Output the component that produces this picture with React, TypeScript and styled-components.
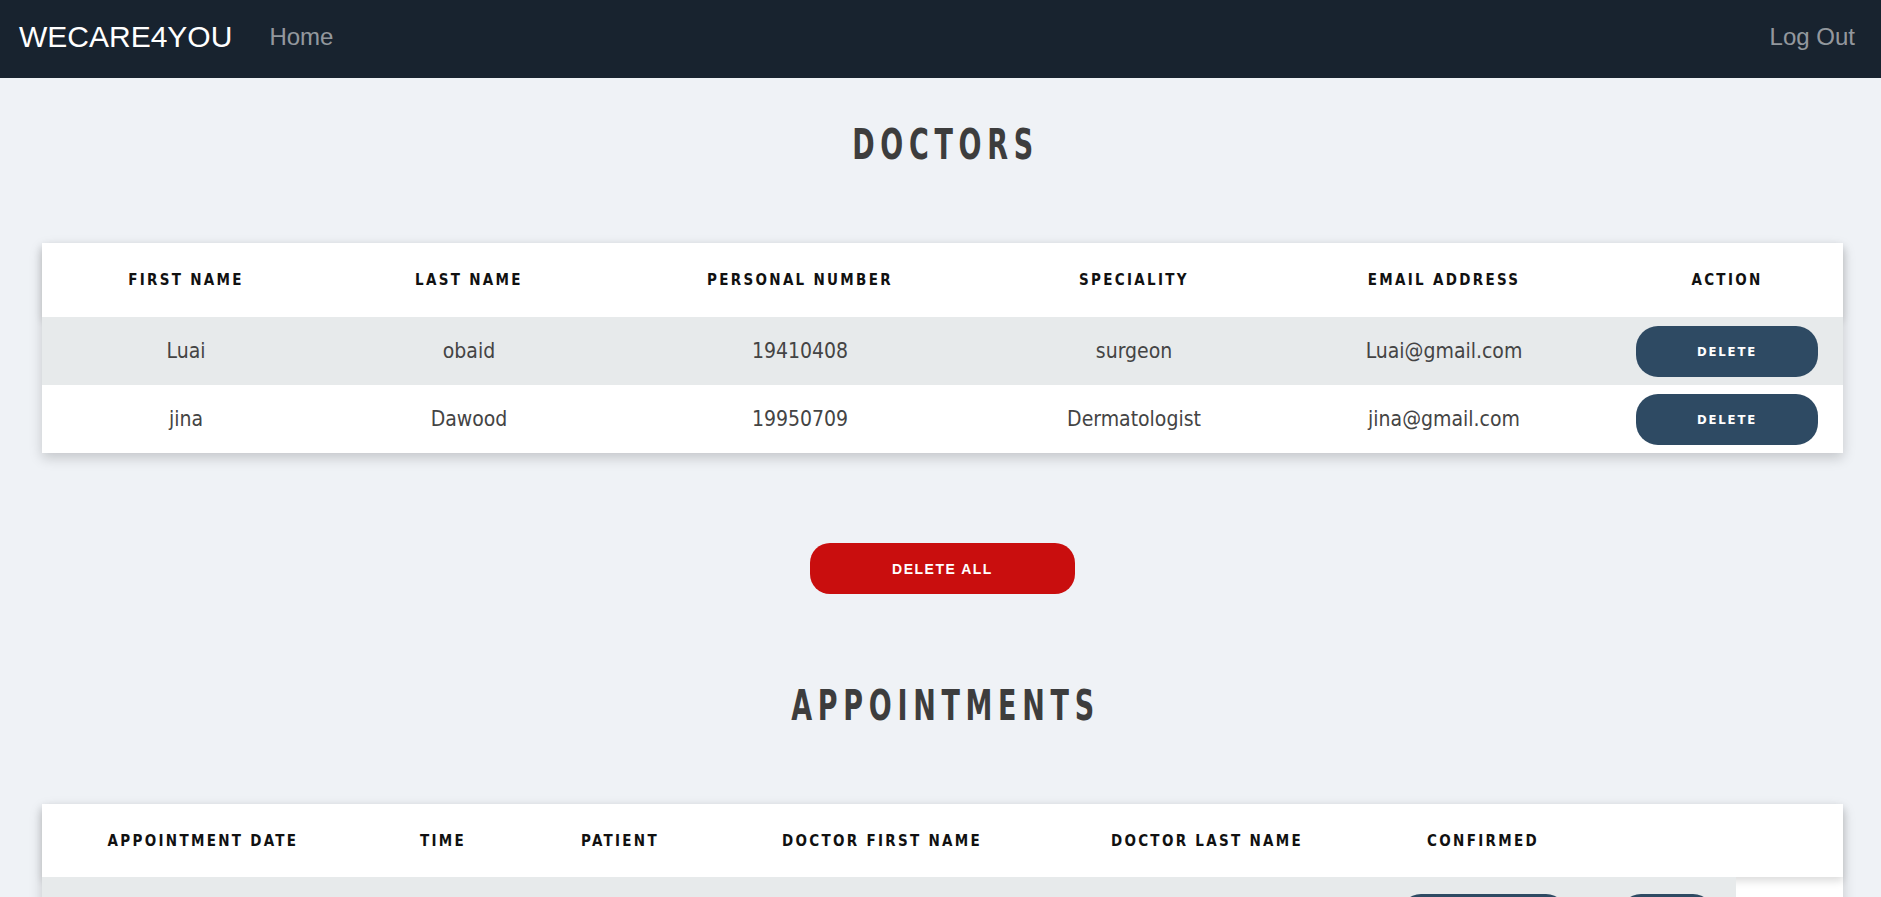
import styled, { createGlobalStyle } from "styled-components";

const GlobalStyle = createGlobalStyle`
  html, body {
    margin: 0;
    background: #eff2f6;
  }
  body {
    font-family: "Liberation Sans", Arial, sans-serif;
  }
  * {
    box-sizing: border-box;
  }
`;

const Navbar = styled.nav`
  height: 78px;
  background: #18232f;
  display: flex;
  align-items: center;
  padding: 0 26px 5px 19px;
`;

const Brand = styled.a`
  color: #fff;
  font-size: 30px;
  text-decoration: none;
  margin-right: 37px;
`;

const NavLink = styled.a<{ $right?: boolean }>`
  color: rgba(255, 255, 255, 0.55);
  font-size: 24px;
  text-decoration: none;
  margin-left: ${(p) => (p.$right ? "auto" : "0")};
`;

const Main = styled.main`
  padding: 43px 38px 0 42px;
  display: flex;
  flex-direction: column;
  align-items: center;
`;

// condensed heavy display heading, stretched tall like Impact
const Heading = styled.h1`
  margin: 0 0 74px;
  padding-left: 6px;
  font-family: "DejaVu Sans Condensed", "DejaVu Sans", sans-serif;
  font-stretch: condensed;
  font-weight: 700;
  font-size: 30px;
  line-height: 48px;
  letter-spacing: 5.7px;
  color: #3d3d3d;
  text-transform: uppercase;
  transform: scaleY(1.4);
`;

const Card = styled.div`
  align-self: stretch;
  background: #fff;
  box-shadow: 0 5px 12px rgba(0, 0, 0, 0.18);
`;

const Row = styled.div<{ $cols: string; $h: number; $shade?: boolean; $w?: string }>`
  display: grid;
  grid-template-columns: ${(p) => p.$cols};
  height: ${(p) => p.$h}px;
  width: ${(p) => p.$w || "auto"};
  align-items: center;
  background: ${(p) => (p.$shade ? "#e7eaeb" : "transparent")};
`;

const HeadRow = styled(Row)`
  box-shadow: 0 4px 8px rgba(0, 0, 0, 0.14);
`;

const HeadCell = styled.div`
  text-align: center;
  font-family: "DejaVu Sans Condensed", "DejaVu Sans", sans-serif;
  font-stretch: condensed;
  font-weight: 700;
  font-size: 15px;
  letter-spacing: 2.3px;
  color: #111;
`;

const Cell = styled.div`
  text-align: center;
  font-family: "DejaVu Sans Condensed", "DejaVu Sans", sans-serif;
  font-stretch: condensed;
  font-size: 21px;
  color: #444;
`;

const DeleteBtn = styled.button<{ $w: number }>`
  justify-self: center;
  width: ${(p) => p.$w}px;
  height: 51px;
  border: none;
  border-radius: 22px;
  background: #2e4a63;
  color: #fff;
  font-family: "DejaVu Sans Condensed", "DejaVu Sans", sans-serif;
  font-stretch: condensed;
  font-weight: 700;
  font-size: 13px;
  letter-spacing: 1.8px;
  cursor: pointer;
`;

const DeleteAll = styled.button`
  margin: 90px 0 88px;
  width: 265px;
  height: 51px;
  border: none;
  border-radius: 20px;
  background: #c90e0e;
  color: #fff;
  font-family: "Liberation Sans", Arial, sans-serif;
  font-weight: 700;
  font-size: 14px;
  letter-spacing: 1.5px;
  cursor: pointer;
`;

const AppointmentRow = styled(Row)`
  align-items: start;
  padding-top: 17px;
`;

const doctorCols = "288px 278px 384px 284px 336px 230px";
const apptCols = "322px 158px 196px 328px 322px 230px 138px";

const doctors = [
  { first: "Luai", last: "obaid", number: "19410408", speciality: "surgeon", email: "Luai@gmail.com" },
  { first: "jina", last: "Dawood", number: "19950709", speciality: "Dermatologist", email: "jina@gmail.com" },
];

export default function App() {
  return (
    <>
      <GlobalStyle />
      <Navbar>
        <Brand href="#">WECARE4YOU</Brand>
        <NavLink href="#">Home</NavLink>
        <NavLink href="#" $right>
          Log Out
        </NavLink>
      </Navbar>
      <Main>
        <Heading>Doctors</Heading>
        <Card>
          <HeadRow $cols={doctorCols} $h={74}>
            <HeadCell>FIRST NAME</HeadCell>
            <HeadCell>LAST NAME</HeadCell>
            <HeadCell>PERSONAL NUMBER</HeadCell>
            <HeadCell>SPECIALITY</HeadCell>
            <HeadCell>EMAIL ADDRESS</HeadCell>
            <HeadCell>ACTION</HeadCell>
          </HeadRow>
          {doctors.map((d, i) => (
            <Row key={d.number} $cols={doctorCols} $h={68} $shade={i % 2 === 0}>
              <Cell>{d.first}</Cell>
              <Cell>{d.last}</Cell>
              <Cell>{d.number}</Cell>
              <Cell>{d.speciality}</Cell>
              <Cell>{d.email}</Cell>
              <DeleteBtn $w={182}>DELETE</DeleteBtn>
            </Row>
          ))}
        </Card>
        <DeleteAll>DELETE ALL</DeleteAll>
        <Heading>Appointments</Heading>
        <Card>
          <HeadRow $cols={apptCols} $h={73}>
            <HeadCell>APPOINTMENT DATE</HeadCell>
            <HeadCell>TIME</HeadCell>
            <HeadCell>PATIENT</HeadCell>
            <HeadCell>DOCTOR FIRST NAME</HeadCell>
            <HeadCell>DOCTOR LAST NAME</HeadCell>
            <HeadCell>CONFIRMED</HeadCell>
          </HeadRow>
          <AppointmentRow $cols={apptCols} $h={85} $shade $w="1694px">
            <Cell />
            <Cell />
            <Cell />
            <Cell />
            <Cell />
            <DeleteBtn $w={169} aria-label="confirm" />
            <DeleteBtn $w={96} aria-label="delete" />
          </AppointmentRow>
        </Card>
      </Main>
    </>
  );
}
